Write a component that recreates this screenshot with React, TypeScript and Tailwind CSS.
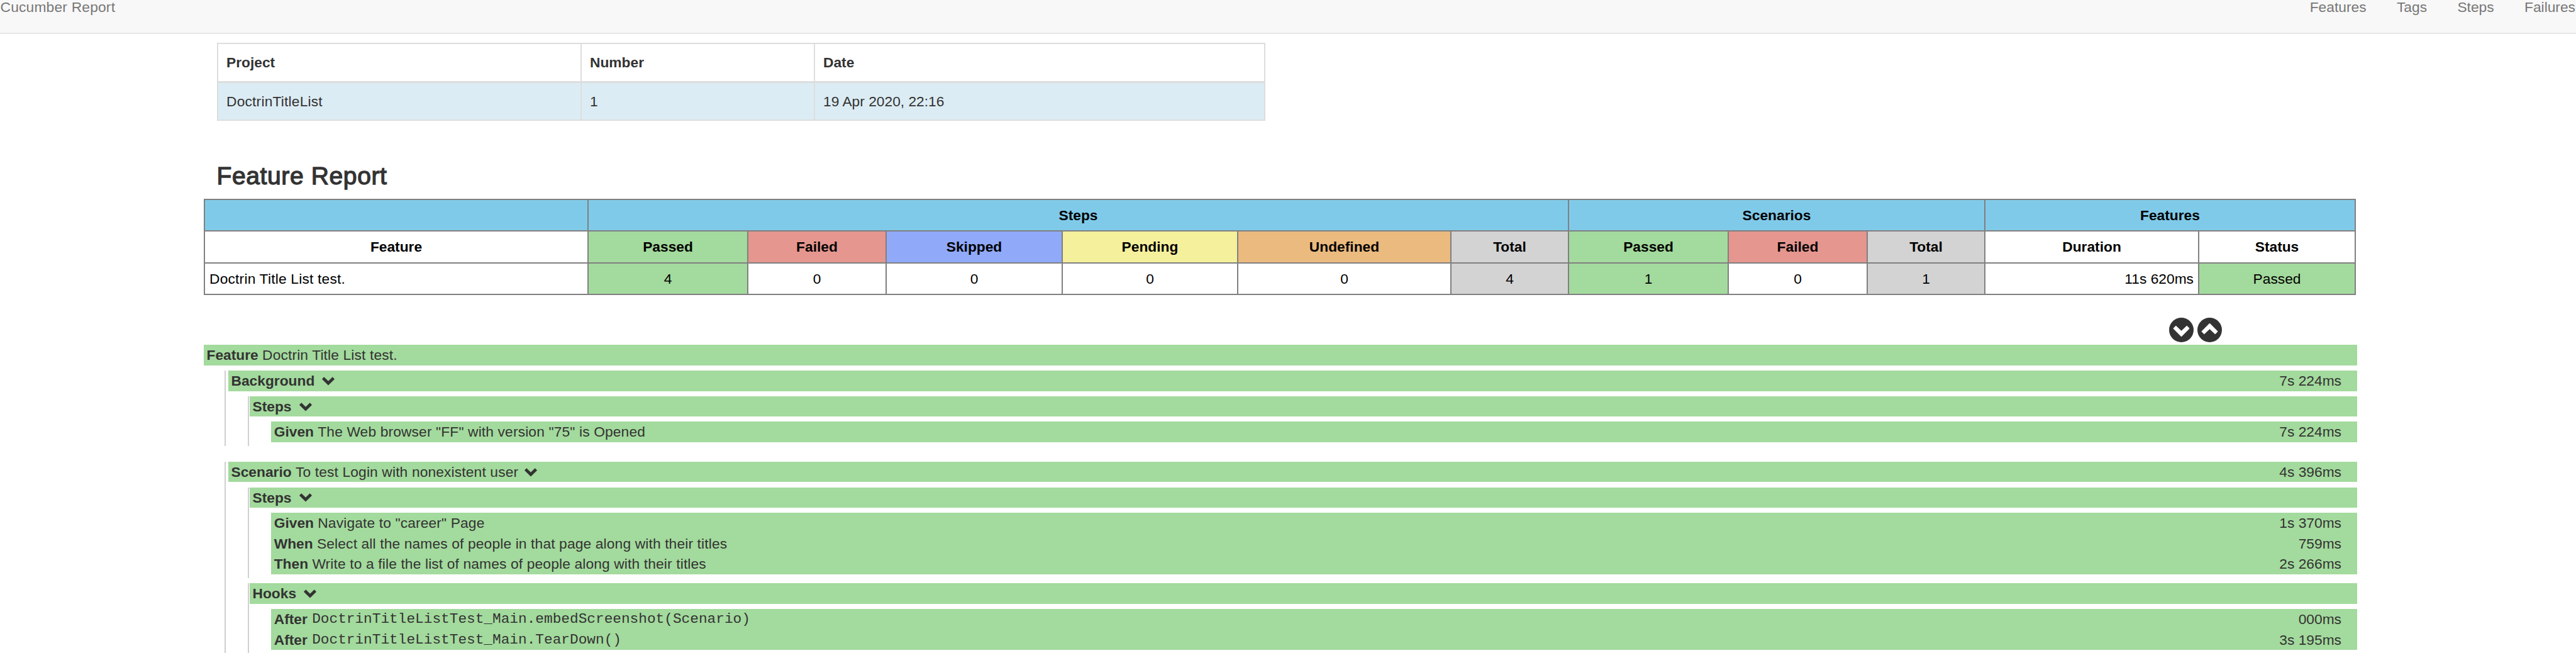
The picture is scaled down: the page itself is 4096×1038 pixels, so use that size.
import React from "react";

const GREEN = "bg-[#a3da9d]";

function Chevron({ tight }: { tight?: boolean }) {
  return (
    <svg className={`${tight ? "ml-[10px]" : "ml-[12px]"} mt-[1px] h-[14px] w-[20px] shrink-0`} viewBox="0 0 74 51" fill="#333">
      <path d="M37 50 L1 14 Q0 13 1 12 L11 1 Q12 0 13 1 L37 25 L61 1 Q62 0 63 1 L73 12 Q74 13 73 14 Z" />
    </svg>
  );
}

function CircleChevron({ up = false }: { up?: boolean }) {
  return (
    <svg className={up ? "size-[39px] rotate-180" : "size-[39px]"} viewBox="-72 -72 144 144">
      <circle r="72" fill="#333" />
      <path d="M0 35 L-44 -9 L-32 -21 L0 10 L32 -21 L44 -9 Z" fill="#fff" stroke="#fff" strokeWidth="7" strokeLinejoin="round" />
    </svg>
  );
}

type LineProps = {
  label: string;
  text?: string;
  mono?: boolean;
  duration?: string;
  chevron?: boolean;
};

function Line({ label, text, mono, duration, chevron }: LineProps) {
  return (
    <div className={`flex h-[32.55px] items-center pl-[4.5px] pr-[25px] leading-[32.55px] whitespace-pre ${GREEN}`}>
      <span className="font-bold">{label}</span>
      {text && <span> </span>}
      {text && <span className={mono ? "pl-[1px] font-['Liberation_Mono',monospace]" : "tracking-[0.14px]"}>{text}</span>}
      {chevron && <Chevron tight={!!text} />}
      {duration && <span className="ml-auto">{duration}</span>}
    </div>
  );
}

function Group({ label, lines }: { label: string; lines: LineProps[] }) {
  return (
    <div className="ml-[31px] border-l-2 border-[#d0d0d0] pb-[6.5px] pl-[1px]">
      <Line label={label} chevron />
      <div className="mt-[8.14px] ml-[34.2px]">
        {lines.map((l) => (
          <Line key={l.label + l.text} {...l} />
        ))}
      </div>
    </div>
  );
}

const HEAD = [
  ["Feature", "bg-white"],
  ["Passed", "bg-[#a3da9d]"],
  ["Failed", "bg-[#e5968f]"],
  ["Skipped", "bg-[#90a9f9]"],
  ["Pending", "bg-[#f5f09c]"],
  ["Undefined", "bg-[#ebba7f]"],
  ["Total", "bg-[#d3d3d3]"],
  ["Passed", "bg-[#a3da9d]"],
  ["Failed", "bg-[#e5968f]"],
  ["Total", "bg-[#d3d3d3]"],
  ["Duration", "bg-white"],
  ["Status", "bg-white"],
];

const ROW = [
  ["Doctrin Title List test.", "bg-white justify-start pl-[7px] tracking-[0.2px]"],
  ["4", "bg-[#a3da9d] justify-center"],
  ["0", "bg-white justify-center"],
  ["0", "bg-white justify-center"],
  ["0", "bg-white justify-center"],
  ["0", "bg-white justify-center"],
  ["4", "bg-[#d3d3d3] justify-center"],
  ["1", "bg-[#a3da9d] justify-center"],
  ["0", "bg-white justify-center"],
  ["1", "bg-[#d3d3d3] justify-center"],
  ["11s 620ms", "bg-white justify-end pr-[7px]"],
  ["Passed", "bg-[#a3da9d] justify-center"],
];

export default function App() {
  return (
    <div className="h-[1038px] w-[4096px] overflow-hidden bg-white font-['Liberation_Sans',Arial,sans-serif] text-[22.78px] text-[#333]">
      <nav className="flex h-[54px] items-start justify-between border-b-2 border-[#e7e7e7] bg-[#f8f8f8] pr-[1px] pl-[0.5px] leading-[23px] text-[#777]">
        <span className="tracking-[0.2px]">Cucumber Report</span>
        <div className="flex gap-[48.4px]">
          <span>Features</span>
          <span>Tags</span>
          <span>Steps</span>
          <span>Failures</span>
        </div>
      </nav>

      <div className="mt-[14px] ml-[345px] w-[1667px] bg-[#ddd] p-[2px]">
        <div className="grid h-[59px] grid-cols-[576px_369px_714px] gap-x-[2px] font-bold">
          <div className="flex items-center bg-white pl-[13px]">Project</div>
          <div className="flex items-center bg-white pl-[13px]">Number</div>
          <div className="flex items-center bg-white pl-[13px]">Date</div>
        </div>
        <div className="mt-[3px] grid h-[58px] grid-cols-[576px_369px_714px] gap-x-[2px]">
          <div className="flex items-center bg-[#dcecf4] pl-[13px] tracking-[0.2px]">DoctrinTitleList</div>
          <div className="flex items-center bg-[#dcecf4] pl-[13px]">1</div>
          <div className="flex items-center bg-[#dcecf4] pl-[13px]">19 Apr 2020, 22:16</div>
        </div>
      </div>

      <h2 className="mt-[66px] ml-[344.5px] h-[43px] text-[39.06px] leading-[43px] tracking-[0.6px] [-webkit-text-stroke:1.3px_#333]">Feature Report</h2>

      <div className="mt-[15px] ml-[324px] grid w-[3422px] grid-cols-[608px_252px_218px_278px_277px_337px_185px_252px_219px_185px_338px_247px] grid-rows-[48px_49px_48px] gap-[2px] bg-[#808080] p-[2px] text-black">
        <div className="bg-[#80cae9]" />
        <div className="col-span-6 flex items-center justify-center bg-[#80cae9] font-bold">Steps</div>
        <div className="col-span-3 flex items-center justify-center bg-[#80cae9] font-bold">Scenarios</div>
        <div className="col-span-2 flex items-center justify-center bg-[#80cae9] font-bold">Features</div>
        {HEAD.map(([t, c], i) => (
          <div key={i} className={`flex items-center justify-center font-bold ${c}`}>{t}</div>
        ))}
        {ROW.map(([t, c], i) => (
          <div key={i} className={`flex items-center ${c}`}>{t}</div>
        ))}
      </div>

      <div className="mt-[36px] ml-[3449px] flex h-[43.4px] items-start gap-[6px]">
        <CircleChevron />
        <CircleChevron up />
      </div>

      <div className="ml-[324px] w-[3424px]">
        <Line label="Feature" text="Doctrin Title List test." />
        <div className="mt-[8.14px] ml-[33px] border-l-2 border-[#d0d0d0] pl-[4px]">
          <Line label="Background" chevron duration="7s 224ms" />
          <div className="mt-[8.14px]">
            <Group label="Steps" lines={[{ label: "Given", text: 'The Web browser "FF" with version "75" is Opened', duration: "7s 224ms" }]} />
          </div>
        </div>
        <div className="mt-[24.4px] ml-[33px] border-l-2 border-[#d0d0d0] pl-[4px]">
          <Line label="Scenario" text="To test Login with nonexistent user" chevron duration="4s 396ms" />
          <div className="mt-[8.14px] flex flex-col gap-[8.14px]">
            <Group
              label="Steps"
              lines={[
                { label: "Given", text: 'Navigate to "career" Page', duration: "1s 370ms" },
                { label: "When", text: "Select all the names of people in that page along with their titles", duration: "759ms" },
                { label: "Then", text: "Write to a file the list of names of people along with their titles", duration: "2s 266ms" },
              ]}
            />
            <Group
              label="Hooks"
              lines={[
                { label: "After", text: "DoctrinTitleListTest_Main.embedScreenshot(Scenario)", mono: true, duration: "000ms" },
                { label: "After", text: "DoctrinTitleListTest_Main.TearDown()", mono: true, duration: "3s 195ms" },
              ]}
            />
          </div>
        </div>
      </div>
    </div>
  );
}
